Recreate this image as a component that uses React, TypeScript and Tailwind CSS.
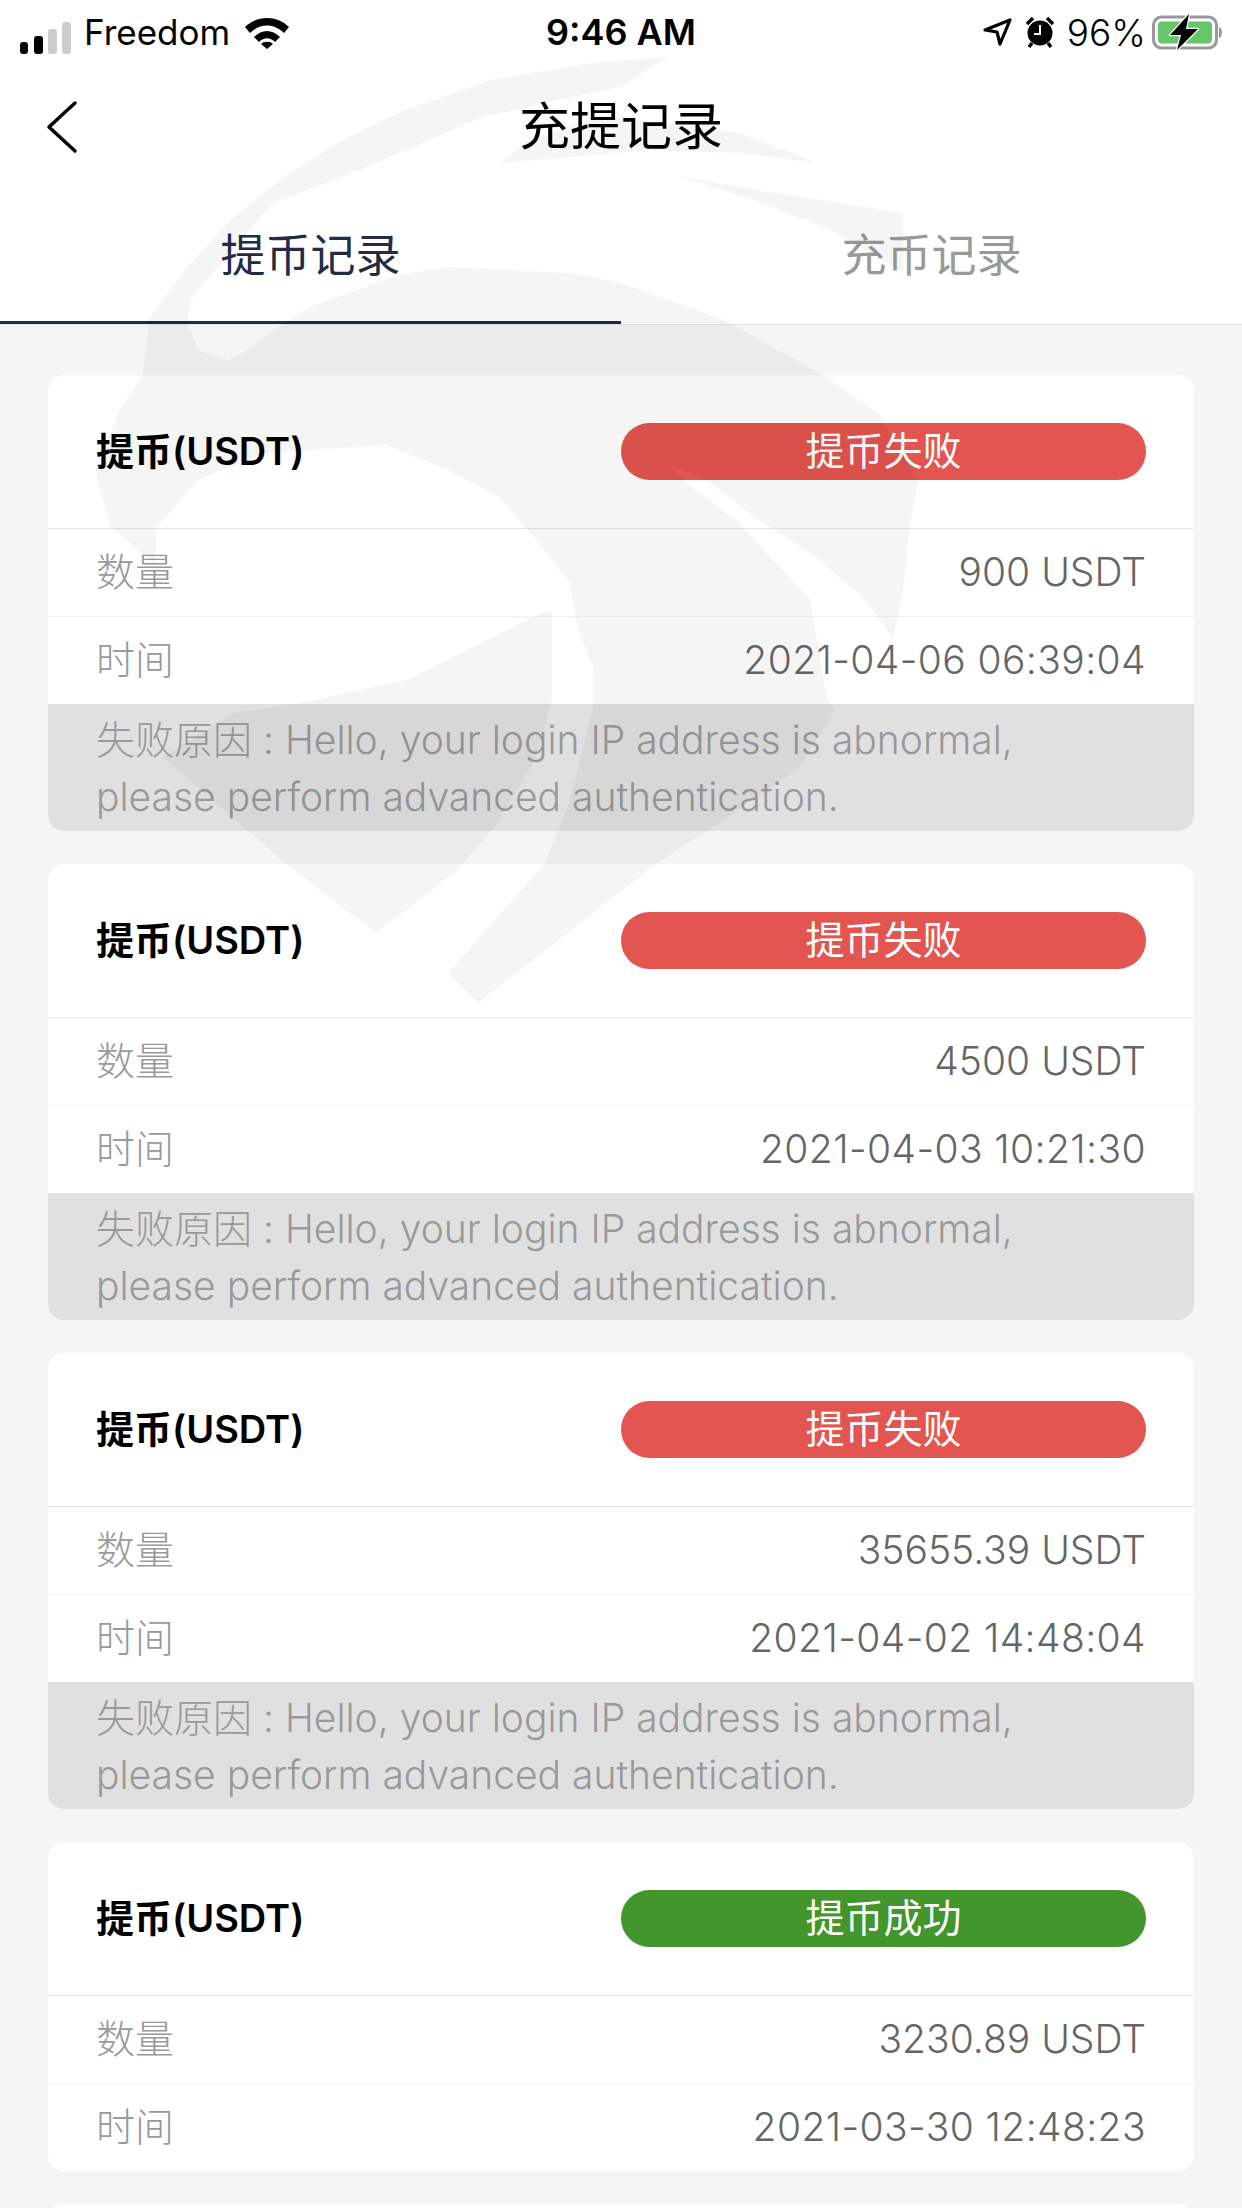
import React from 'react';

type Record = { amount: string; time: string; status: string; failed: boolean };

const records: Record[] = [
  { amount: '900 USDT', time: '2021-04-06 06:39:04', status: '提币失败', failed: true },
  { amount: '4500 USDT', time: '2021-04-03 10:21:30', status: '提币失败', failed: true },
  { amount: '35655.39 USDT', time: '2021-04-02 14:48:04', status: '提币失败', failed: true },
  { amount: '3230.89 USDT', time: '2021-03-30 12:48:23', status: '提币成功', failed: false },
];

const StatusBar = () => (
  <div className="flex h-[62px] items-center justify-between bg-white pt-[2px] text-[36px] leading-none text-black">
    <div className="flex w-[400px] items-center">
      <svg width="72" height="46" viewBox="0 0 72 46" className="ml-[18px]">
        <rect x="2" y="33" width="8" height="12" rx="3" fill="#000" />
        <rect x="16" y="27" width="9" height="18" rx="3" fill="#000" />
        <rect x="30" y="20" width="9" height="25" rx="3" fill="#ccc" />
        <rect x="44" y="13" width="9" height="32" rx="3" fill="#ccc" />
      </svg>
      <span className="ml-[-6px] text-[35px]">Freedom</span>
      <svg width="46" height="34" viewBox="0 0 46 34" className="ml-[14px]">
        <path d="M1 12 C13 0 33 0 45 12 L40 18 C30 8 16 8 6 18 Z" fill="#000" />
        <path d="M10 22 C18 14 28 14 36 22 L31 27 C26 22 20 22 15 27 Z" fill="#000" />
        <path d="M17 29 C20 26 26 26 29 29 L23 34 Z" fill="#000" />
      </svg>
    </div>
    <span className="font-semibold">9:46 AM</span>
    <div className="flex w-[400px] items-center justify-end pr-[16px]">
      <svg width="30" height="30" viewBox="0 0 30 30">
        <path d="M2 13 L27 3 L17 27 L14 15 Z" fill="none" stroke="#000" strokeWidth="3.2" strokeLinejoin="round" />
      </svg>
      <svg width="30" height="32" viewBox="0 0 30 32" className="ml-[12px]">
        <circle cx="15" cy="17" r="12.5" fill="#000" />
        <path d="M2 8 L8 2 M28 8 L22 2 M7 27 L4 31 M23 27 L26 31" stroke="#000" strokeWidth="3.5" />
        <path d="M15 9 V18 H9" fill="none" stroke="#fff" strokeWidth="2" />
      </svg>
      <span className="ml-[12px] text-[37px] font-light">96%</span>
      <svg width="74" height="36" viewBox="0 0 74 36" className="ml-[6px]">
        <rect x="1.5" y="3" width="63" height="31" rx="8" fill="none" stroke="#999" strokeWidth="3" />
        <rect x="6" y="7.5" width="54" height="22" rx="4" fill="#66c66a" />
        <path d="M67 13 C71 14 71 23 67 24 Z" fill="#999" />
        <path d="M37 0 L18 21 H29 L25 36 L46 15 H34 Z" fill="#000" stroke="#fff" strokeWidth="2.5" strokeLinejoin="round" paintOrder="stroke" />
      </svg>
    </div>
  </div>
);

const Card = ({ record }: { record: Record }) => (
  <div className="overflow-hidden rounded-[16px] bg-white">
    <div className="flex h-[154px] items-center justify-between border-b border-[#e5e5e5] px-[48px]">
      <span className="text-[38px] font-semibold text-black">提币(USDT)</span>
      <span
        className={`flex h-[57px] w-[525px] items-center justify-center rounded-full text-[39px] text-white ${
          record.failed ? 'bg-[#e35550]' : 'bg-[#43962b]'
        }`}
      >
        {record.status}
      </span>
    </div>
    <div className="flex h-[88px] items-center justify-between border-b border-[#f2f2f2] px-[48px]">
      <span className="text-[39px] font-light text-[#999]">数量</span>
      <span className="text-[39px] font-light text-[#666]">{record.amount}</span>
    </div>
    <div className="flex h-[87px] items-center justify-between px-[48px]">
      <span className="text-[39px] font-light text-[#999]">时间</span>
      <span className="text-[39px] font-light tracking-[0.4px] text-[#666]">{record.time}</span>
    </div>
    {record.failed && (
      <div className="h-[127px] bg-[#e0e0e0] px-[48px] pt-[7px] text-[39px] leading-[57px] font-light text-[#999]">
        失败原因 : Hello, your login IP address is abnormal,
        <br />
        please perform advanced authentication.
      </div>
    )}
  </div>
);

// faint logo that the app lays over the whole page
const Watermark = () => (
  <svg className="pointer-events-none absolute inset-0" width="1242" height="2208" viewBox="0 0 1242 2208">
    <g fill="#000" fillOpacity="0.04">
      <path d="M668 57 L600 62 L491 80 L400 112 L337 143 L280 180 L230 220 L185 270 L150 317 L142 377 L119 410 L96 477 L111 527 L155 565 L157 527 L198 480 L264 453 L386 445 L448 470 L499 497 L534 537 L570 583 L578 630 L593 667 L593 707 L570 800 L545 863 L448 973 L478 1003 L550 947 L657 863 L713 827 L800 767 L835 710 L827 697 L810 599 L737 521 L683 480 L670 465 L707 480 L760 521 L817 558 L860 595 L880 619 L893 640 L903 590 L910 525 L918 480 L880 415 L825 376 L760 340 L724 320 L621 283 L570 273 L448 267 L397 275 L310 307 L269 333 L244 353 L228 360 L198 350 L188 323 L190 300 L273 203 L360 170 L483 117 L560 100 L621 87 Z" />
      <path d="M530 140 L600 115 L678 125 L740 133 L817 163 L740 153 L650 150 L560 158 L499 163 Z" />
      <path d="M678 176 L757 190 L903 213 L903 272 L831 230 L757 201 Z" />
      <path d="M545 611 L407 680 L300 703 L233 713 L162 757 L239 823 L290 867 L376 933 L458 870 L494 827 L534 763 L552 700 L552 613 Z" />
    </g>
  </svg>
);

export default function App() {
  return (
    <div className="relative h-[2208px] w-[1242px] overflow-hidden bg-[#f5f5f5] font-[Inter,'Noto_Sans_CJK_SC',sans-serif]">
      <StatusBar />
      <div className="relative flex h-[130px] items-center justify-center bg-white">
        <svg width="32" height="54" viewBox="0 0 32 54" className="absolute left-[46px] top-[38px]">
          <path d="M29 3 L3 27 L29 51" fill="none" stroke="#000" strokeWidth="3.5" strokeLinecap="round" strokeLinejoin="round" />
        </svg>
        <span className="text-[51px] text-black">充提记录</span>
      </div>
      <div className="flex h-[133px] border-b border-[#e5e5e5] bg-white">
        <div className="flex h-[132px] w-1/2 items-center justify-center border-b-[3px] border-[#232b45] pb-[2px] text-[45px] text-[#232b45]">
          提币记录
        </div>
        <div className="flex h-[132px] w-1/2 items-center justify-center pb-[5px] text-[45px] text-[#999]">
          充币记录
        </div>
      </div>
      <div className="flex flex-col gap-[33px] px-[48px] pt-[50px]">
        {records.map((record) => (
          <Card key={record.time} record={record} />
        ))}
        <div className="h-[153px] rounded-[16px] bg-white" />
      </div>
      <Watermark />
    </div>
  );
}
